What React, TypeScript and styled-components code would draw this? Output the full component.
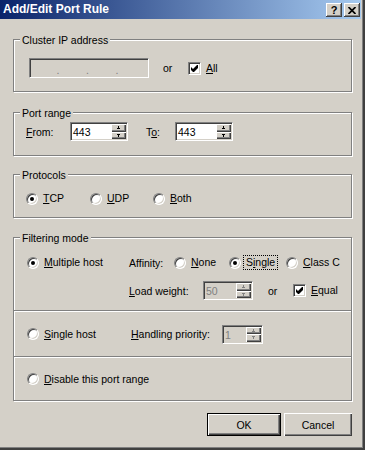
import React from 'react';
import styled, { createGlobalStyle } from 'styled-components';

const GlobalStyle = createGlobalStyle`
  html, body {
    margin: 0;
    padding: 0;
    background: #d4d0c8;
  }
  body {
    font-family: "Liberation Sans", Arial, sans-serif;
    font-size: 10.5px;
    color: #000;
  }
  u {
    text-underline-offset: 1px;
  }
`;

const Window = styled.div`
  width: 365px;
  height: 450px;
  box-sizing: border-box;
  padding-right: 4px;
  background: #d4d0c8;
  display: flex;
  flex-direction: column;
  box-shadow: inset -1px -1px 0 #404040, inset -2px -2px 0 #404040, inset -3px -3px 0 #808080;
`;

const TitleBar = styled.div`
  height: 19px;
  flex-shrink: 0;
  display: flex;
  align-items: flex-start;
  padding: 0 1px 0 3px;
  background: linear-gradient(to right, #0a246a, #a6caf0);
`;

const TitleText = styled.div`
  flex: 1;
  color: #fff;
  font-weight: bold;
  font-size: 12px;
  line-height: 19px;
  white-space: nowrap;
`;

const CaptionButtons = styled.div`
  display: flex;
  gap: 2px;
  margin-top: 3px;
`;

const CaptionButton = styled.div`
  width: 16px;
  height: 14px;
  box-sizing: border-box;
  background: #d4d0c8;
  display: flex;
  align-items: center;
  justify-content: center;
  font-weight: bold;
  font-size: 11px;
  line-height: 14px;
  box-shadow: inset -1px -1px 0 #404040, inset 1px 1px 0 #fff, inset -2px -2px 0 #808080;
`;

const Body = styled.div`
  flex: 1;
  display: flex;
  flex-direction: column;
  padding: 20px 9px 0 13px;
`;

const Group = styled.div<{ $h: number; $mt?: number; $pad?: string }>`
  position: relative;
  box-sizing: border-box;
  height: ${p => p.$h}px;
  margin-top: ${p => p.$mt ?? 0}px;
  padding: ${p => p.$pad ?? '0'};
  border: 1px solid #808080;
  box-shadow: inset 1px 1px 0 #fff, 1px 1px 0 #fff;
  display: flex;
  flex-direction: column;
`;

const Caption = styled.span`
  position: absolute;
  top: -6px;
  left: 6px;
  padding: 0 2px;
  line-height: 13px;
  background: #d4d0c8;
  white-space: nowrap;
`;

const Row = styled.div<{ $h?: number }>`
  display: flex;
  align-items: center;
  height: ${p => p.$h ?? 19}px;
`;

const FieldLabel = styled.span<{ $w?: number; $ml?: number }>`
  flex-shrink: 0;
  width: ${p => (p.$w ? `${p.$w}px` : 'auto')};
  margin-left: ${p => p.$ml ?? 0}px;
  white-space: nowrap;
`;

const Sunken = styled.div<{ $w: number; $h?: number; $disabled?: boolean }>`
  flex-shrink: 0;
  box-sizing: border-box;
  width: ${p => p.$w}px;
  height: ${p => p.$h ?? 19}px;
  display: flex;
  border: 1px solid;
  border-color: #808080 #fff #fff #808080;
  box-shadow: inset 1px 1px 0 #404040, inset -1px -1px 0 #d4d0c8;
  background: ${p => (p.$disabled ? '#d4d0c8' : '#fff')};
`;

const SpinValue = styled.span<{ $disabled?: boolean }>`
  flex: 1;
  padding: 3px 0 0 2px;
  line-height: 13px;
  color: ${p => (p.$disabled ? '#808080' : '#000')};
`;

const SpinButtons = styled.div`
  width: 15px;
  margin: 1px 1px 1px 0;
  display: flex;
  flex-direction: column;
`;

const SpinButton = styled.div`
  flex: 1;
  display: flex;
  align-items: center;
  justify-content: center;
  background: #d4d0c8;
  box-shadow: inset 1px 1px 0 #fff, inset -1px -1px 0 #404040, inset -2px -2px 0 #808080;
`;

const IpSegment = styled.span`
  flex: 1;
  display: flex;
  align-items: center;
  justify-content: flex-end;
  padding-top: 4px;
  color: #808080;
  &:last-child {
    visibility: hidden;
  }
`;

const OptionWrap = styled.span<{ $w?: number }>`
  flex-shrink: 0;
  display: flex;
  align-items: center;
  width: ${p => (p.$w ? `${p.$w}px` : 'auto')};
`;

const OptionText = styled.span<{ $focus?: boolean }>`
  margin-left: 2px;
  padding: 0 2px;
  line-height: 13px;
  border: 1px dotted ${p => (p.$focus ? '#000' : 'transparent')};
  white-space: nowrap;
`;

const RadioMark = styled.span`
  flex-shrink: 0;
  width: 12px;
  height: 12px;
  box-sizing: border-box;
  border-radius: 50%;
  border: 1px solid;
  border-color: #808080 #fff #fff #808080;
  background: #fff;
  box-shadow: inset 1px 1px 0 #404040, inset -1px -1px 0 #d4d0c8;
  display: flex;
  align-items: center;
  justify-content: center;
`;

const Dot = styled.span`
  width: 4px;
  height: 4px;
  border-radius: 50%;
  background: #000;
`;

const CheckMark = styled.span`
  flex-shrink: 0;
  width: 13px;
  height: 13px;
  box-sizing: border-box;
  border: 1px solid;
  border-color: #808080 #fff #fff #808080;
  background: #fff;
  box-shadow: inset 1px 1px 0 #404040, inset -1px -1px 0 #d4d0c8;
  display: flex;
  align-items: center;
  justify-content: center;
`;

const Section = styled.div<{ $h: number; $pt?: number }>`
  height: ${p => p.$h}px;
  box-sizing: border-box;
  padding: ${p => (p.$pt !== undefined ? `${p.$pt}px 0 0 13px` : '0 0 0 13px')};
  display: flex;
  flex-direction: column;
  justify-content: ${p => (p.$pt !== undefined ? 'flex-start' : 'center')};
  gap: 9px;
`;

const Divider = styled.div`
  height: 0;
  border-top: 1px solid #808080;
  border-bottom: 1px solid #fff;
`;

const Options = styled.div`
  display: flex;
  align-items: center;
`;

const ButtonRow = styled.div`
  display: flex;
  justify-content: flex-end;
  gap: 3px;
  margin-top: 12px;
`;

const PushButton = styled.button<{ $w: number; $default?: boolean }>`
  width: ${p => p.$w}px;
  height: 23px;
  box-sizing: border-box;
  padding: 0;
  font-family: inherit;
  font-size: 10.5px;
  color: #000;
  background: #d4d0c8;
  border: ${p => (p.$default ? '1px solid #000' : 'none')};
  box-shadow: inset 1px 1px 0 #fff, inset -1px -1px 0 #404040, inset -2px -2px 0 #808080;
`;

const Arrow = ({ up, disabled }: { up?: boolean; disabled?: boolean }) => (
  <svg width="5" height="3" viewBox="0 0 5 3" shapeRendering="crispEdges">
    <path
      d={up ? 'M2 0h1v1h1v1h1v1h-5v-1h1v-1h1z' : 'M0 0h5v1h-1v1h-1v1h-1v-1h-1v-1h-1z'}
      transform="translate(1 0) scale(0.6 1)"
      fill={disabled ? '#808080' : '#000'}
    />
  </svg>
);

const Spin = ({ value, w, disabled }: { value: string; w: number; disabled?: boolean }) => (
  <Sunken $w={w} $disabled={disabled}>
    <SpinValue $disabled={disabled}>{value}</SpinValue>
    <SpinButtons>
      <SpinButton>
        <Arrow up disabled={disabled} />
      </SpinButton>
      <SpinButton>
        <Arrow disabled={disabled} />
      </SpinButton>
    </SpinButtons>
  </Sunken>
);

const Radio = ({ label, on, focus, w }: { label: React.ReactNode; on?: boolean; focus?: boolean; w?: number }) => (
  <OptionWrap $w={w}>
    <RadioMark>{on && <Dot />}</RadioMark>
    <OptionText $focus={focus}>{label}</OptionText>
  </OptionWrap>
);

const Check = ({ label }: { label: React.ReactNode }) => (
  <OptionWrap>
    <CheckMark>
      <svg width="7" height="7" viewBox="0 0 7 7">
        <polygon points="0,2 2,4 6,0 7,0 7,3 3,7 2,7 0,5" fill="#000" />
      </svg>
    </CheckMark>
    <OptionText>{label}</OptionText>
  </OptionWrap>
);

export default function App() {
  return (
    <>
      <GlobalStyle />
      <Window>
        <TitleBar>
          <TitleText>Add/Edit Port Rule</TitleText>
          <CaptionButtons>
            <CaptionButton>?</CaptionButton>
            <CaptionButton>
              <svg width="8" height="7" viewBox="0 0 8 7">
                <path d="M0.5 0 L7.5 7 M7.5 0 L0.5 7" stroke="#000" strokeWidth="1.7" />
              </svg>
            </CaptionButton>
          </CaptionButtons>
        </TitleBar>

        <Body>
          <Group $h={53} $pad="18px 0 0 15px">
            <Caption>Cluster IP address</Caption>
            <Row $h={20}>
              <Sunken $w={120} $h={20} $disabled>
                <IpSegment>.</IpSegment>
                <IpSegment>.</IpSegment>
                <IpSegment>.</IpSegment>
                <IpSegment>.</IpSegment>
              </Sunken>
              <FieldLabel $ml={14} $w={25}>or</FieldLabel>
              <Check label={<><u>A</u>ll</>} />
            </Row>
          </Group>

          <Group $h={44} $mt={20} $pad="9px 0 0 12px">
            <Caption>Port range</Caption>
            <Row>
              <FieldLabel $w={44}><u>F</u>rom:</FieldLabel>
              <Spin value="443" w={58} />
              <FieldLabel $ml={18} $w={29}>T<u>o</u>:</FieldLabel>
              <Spin value="443" w={58} />
            </Row>
          </Group>

          <Group $h={44} $mt={18} $pad="14px 0 0 12px">
            <Caption>Protocols</Caption>
            <Row>
              <Radio w={64} on label={<><u>T</u>CP</>} />
              <Radio w={63} label={<><u>U</u>DP</>} />
              <Radio label={<><u>B</u>oth</>} />
            </Row>
          </Group>

          <Group $h={164} $mt={19}>
            <Caption>Filtering mode</Caption>
            <Section $h={72} $pt={15}>
              <Row>
                <Radio w={102} on label={<><u>M</u>ultiple host</>} />
                <FieldLabel $w={45}>Affinity:</FieldLabel>
                <Options>
                  <Radio w={55} label={<><u>N</u>one</>} />
                  <Radio w={57} on focus label={<>S<u>i</u>ngle</>} />
                  <Radio label={<><u>C</u>lass C</>} />
                </Options>
              </Row>
              <Row>
                <FieldLabel $ml={102} $w={74}><u>L</u>oad weight:</FieldLabel>
                <Spin value="50" w={50} disabled />
                <FieldLabel $ml={15} $w={25}>or</FieldLabel>
                <Check label={<><u>E</u>qual</>} />
              </Row>
            </Section>
            <Divider />
            <Section $h={44}>
              <Row>
                <Radio w={104} label={<><u>S</u>ingle host</>} />
                <FieldLabel $w={91}><u>H</u>andling priority:</FieldLabel>
                <Spin value="1" w={41} disabled />
              </Row>
            </Section>
            <Divider />
            <Section $h={42}>
              <Row>
                <Radio label={<><u>D</u>isable this port range</>} />
              </Row>
            </Section>
          </Group>

          <ButtonRow>
            <PushButton $w={74} $default>OK</PushButton>
            <PushButton $w={68}>Cancel</PushButton>
          </ButtonRow>
        </Body>
      </Window>
    </>
  );
}
